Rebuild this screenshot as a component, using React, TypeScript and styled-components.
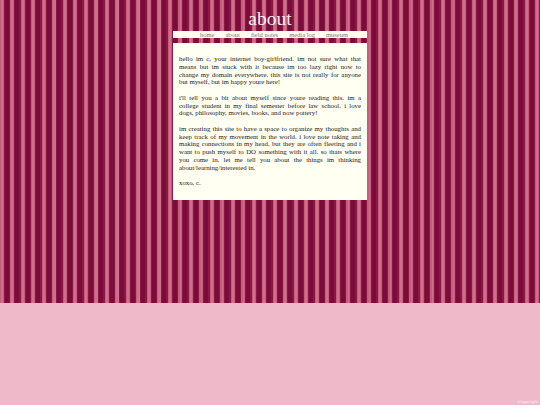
import React, { FC } from 'react';
import styled, { createGlobalStyle } from 'styled-components';

const GlobalStyle = createGlobalStyle`
  html, body {
    margin: 0;
    padding: 0;
    height: 100%;
  }
  body {
    font-family: "Liberation Serif", "Times New Roman", serif;
    background-color: #f0b9ca;
    background-image:
      repeating-linear-gradient(90deg,
        #c45c7c 0px, #c45c7c 1px,
        #d06f8c 1px, #d06f8c 3px,
        #c45c7c 3px, #c45c7c 4px,
        #8a1744 4px, #8a1744 5px,
        #7a0c3a 5px, #7a0c3a 9px,
        #8a1744 9px, #8a1744 10.5px);
    background-size: 100% 303px;
    background-repeat: no-repeat;
    background-position: 0 0;
  }
  #root {
    min-height: 100%;
    display: flex;
    flex-direction: column;
  }
`;

const Page = styled.div`
  flex: 1;
  display: flex;
  flex-direction: column;
  align-items: center;
`;

const Wrapper = styled.div`
  width: 194px;
  display: flex;
  flex-direction: column;
`;

const Title = styled.h1`
  margin: 6px 0 0;
  height: 25px;
  font-size: 19.5px;
  font-weight: normal;
  line-height: 25px;
  text-align: center;
  color: #fbeef0;
`;

const Nav = styled.nav`
  height: 7px;
  padding-left: 8px;
  background: #fffff2;
  display: flex;
  justify-content: center;
  align-items: center;
  gap: 11px;
`;

const NavLink = styled.a`
  font-size: 6.5px;
  line-height: 7px;
  color: #7a7a72;
  text-decoration: none;
`;

const Content = styled.main`
  margin-top: 5px;
  background: #fffff2;
  padding: 12px 6px 13px;
`;

const Para = styled.p`
  margin: 0 0 7.6px;
  font-size: 6.8px;
  line-height: 7.8px;
  color: #222;
  text-align: justify;
  &:last-child { margin-bottom: 0; }
`;

const Footer = styled.footer`
  margin-top: auto;
  align-self: flex-end;
  padding: 0 2px 1px 0;
  font-size: 5px;
  color: rgba(255, 255, 255, 0.75);
`;

const links = ['home', 'about', 'field notes', 'media log', 'museum'];

const App: FC = () => {
  return (
    <>
      <GlobalStyle />
      <Page>
        <Wrapper>
          <Title>about</Title>
          <Nav>
            {links.map((l) => (
              <NavLink key={l} href="#">{l}</NavLink>
            ))}
          </Nav>
          <Content>
            <Para>
              hello im c, your internet boy-girlfriend. im not sure what that means but im stuck with it because im too lazy right now to change my domain everywhere. this site is not really for anyone but myself, but im happy youre here!
            </Para>
            <Para>
              i'll tell you a bit about myself since youre reading this. im a college student in my final semester before law school. i love dogs, philosophy, movies, books, and now pottery!
            </Para>
            <Para>
              im creating this site to have a space to organize my thoughts and keep track of my movement in the world. i love note taking and making connections in my head, but they are often fleeting and i want to push myself to DO something with it all. so thats where you come in. let me tell you about the things im thinking about/learning/interested in.
            </Para>
            <Para>xoxo, c.</Para>
          </Content>
        </Wrapper>
      </Page>
      <Footer>Copyright</Footer>
    </>
  );
};

export default App;
